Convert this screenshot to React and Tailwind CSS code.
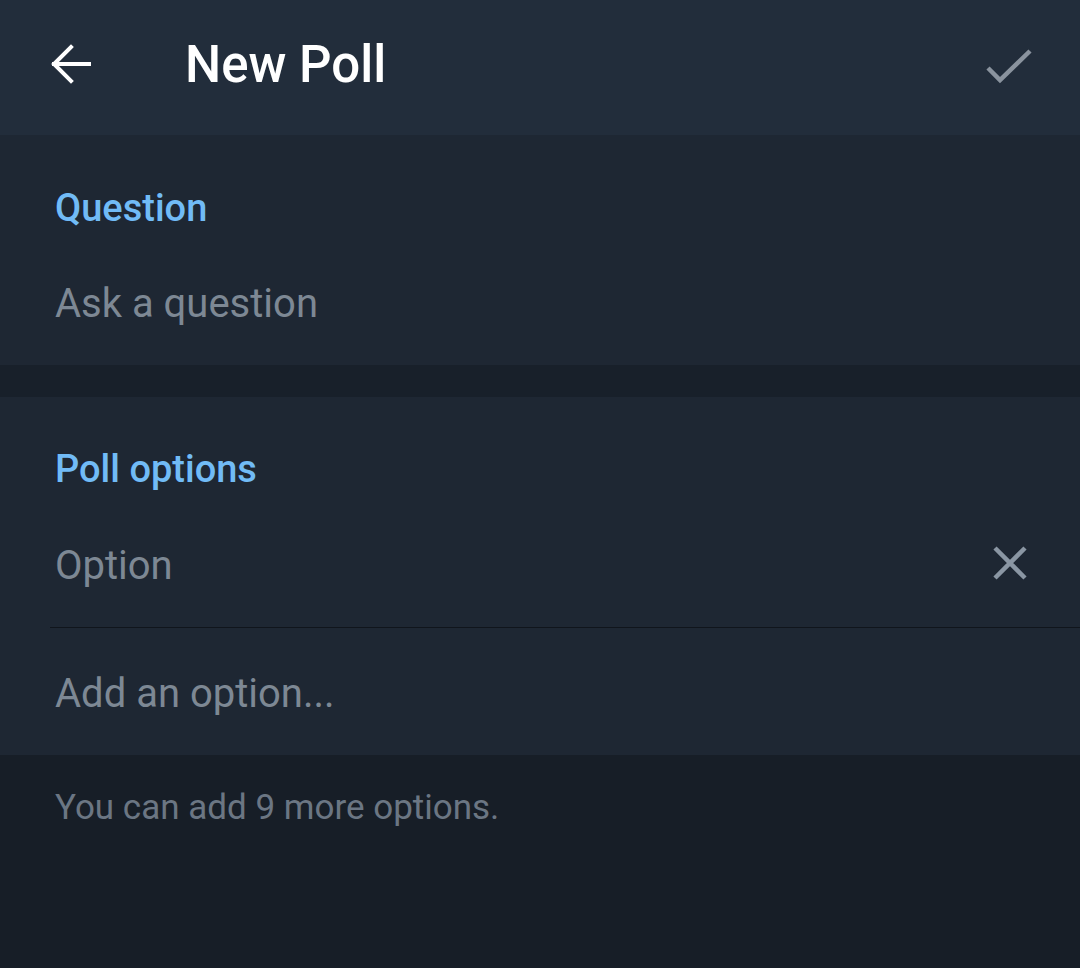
export default function App() {
  return (
    <div className="w-[1080px] h-[968px] bg-[#171e27] flex flex-col" style={{ fontFamily: 'Roboto, "Noto Sans", sans-serif' }}>
      <header className="h-[135px] bg-[#222d3b] flex items-center shrink-0">
        <div className="w-[185px] pl-[50px] pb-[6px] flex items-center">
          <svg width="42" height="42" viewBox="0 0 42 42" fill="none" stroke="#ffffff" strokeWidth="4" strokeLinecap="square">
            <path d="M4 20H39" />
            <path d="M21 3L4 20L21 37" />
          </svg>
        </div>
        <h1 className="text-white text-[51px] font-medium leading-none flex-1 pb-[6px]">New Poll</h1>
        <div className="pr-[48px] pb-[4px]">
          <svg width="46" height="36" viewBox="0 0 46 36" fill="none" stroke="#8a939e" strokeWidth="4.5" strokeLinecap="butt" strokeLinejoin="miter">
            <path d="M2 20L14 32L44 3" />
          </svg>
        </div>
      </header>

      <section className="h-[230px] bg-[#1e2733] flex flex-col pl-[55px] shrink-0">
        <div className="pt-[49px] text-[#71bbf6] text-[38px] font-medium leading-[48px]">Question</div>
        <div className="pt-[48px] text-[#7d8894] text-[40px] leading-[48px]">Ask a question</div>
      </section>

      <div className="h-[32px] bg-[#18202a] shrink-0" />

      <section className="h-[358px] bg-[#1e2733] flex flex-col shrink-0">
        <div className="pt-[48px] pl-[55px] text-[#71bbf6] text-[38px] font-medium leading-[48px]">Poll options</div>
        <div className="ml-[50px] h-[135px] flex items-start pt-[49px] border-b border-[#10151c] shrink-0">
          <span className="pl-[5px] flex-1 text-[#7d8894] text-[40px] leading-[48px]">Option</span>
          <svg className="mr-[52px] mt-[3px]" width="36" height="36" viewBox="0 0 36 36" fill="none" stroke="#8a96a3" strokeWidth="4.5">
            <path d="M3 3L33 33M33 3L3 33" />
          </svg>
        </div>
        <div className="pt-[42px] pl-[55px] text-[#7d8894] text-[40px] leading-[48px]">Add an option...</div>
      </section>

      <div className="pt-[31px] pl-[55px] text-[#6b7683] text-[35px] leading-[44px]">You can add 9 more options.</div>
    </div>
  );
}
